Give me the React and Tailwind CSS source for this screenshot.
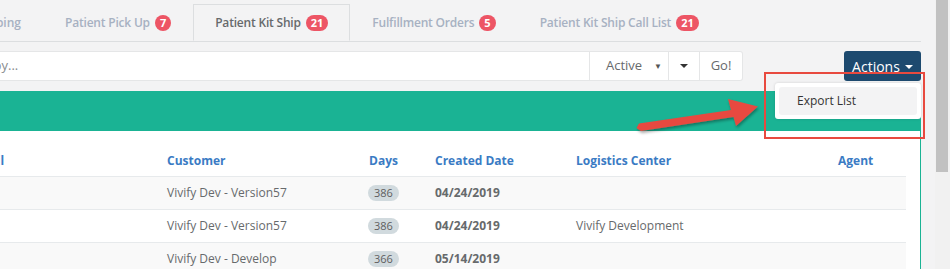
import React from 'react';

const TABS = [
  { label: 'Patient Pick Up', count: 7 },
  { label: 'Patient Kit Ship', count: 21, active: true },
  { label: 'Fulfillment Orders', count: 5 },
  { label: 'Patient Kit Ship Call List', count: 21 },
];

const ROWS = [
  { customer: 'Vivify Dev - Version57', days: 386, created: '04/24/2019', center: '' },
  { customer: 'Vivify Dev - Version57', days: 386, created: '04/24/2019', center: 'Vivify Development' },
  { customer: 'Vivify Dev - Develop', days: 366, created: '05/14/2019', center: '' },
];

const COLS = 'grid grid-cols-[159px_202px_66px_141px_262px_76px]';

function Badge({ n }) {
  return (
    <span className="ml-[5px] inline-flex h-[16px] min-w-[16px] items-center justify-center rounded-full bg-[#ed5565] px-[5px] text-[11px] font-bold leading-none tracking-normal text-white">
      {n}
    </span>
  );
}

function Tab({ label, count, active }) {
  return (
    <div
      className={`flex h-[37px] shrink-0 items-center whitespace-nowrap border px-[21px] text-[12px] font-semibold tracking-[-0.2px] ${
        active
          ? '-mb-px border-[#dcdee0] border-b-[#f3f3f4] bg-[#f3f3f4] text-[#676a6c]'
          : 'border-transparent text-[#a7b1c2]'
      }`}
    >
      {label}
      <Badge n={count} />
    </div>
  );
}

export default function App() {
  return (
    <div
      className="relative flex h-[269px] w-[950px] overflow-hidden bg-[#f3f3f4] text-[#676a6c]"
      style={{ fontFamily: '"Open Sans", "Noto Sans", sans-serif' }}
    >
      {/* main column */}
      <div className="flex w-[935px] shrink-0 flex-col pr-[14px]">
        {/* tabs */}
        <div className="flex shrink-0 border-b border-[#dcdee0] pt-[4px]">
          <div className="flex h-[37px] w-[43px] shrink-0 items-center justify-end overflow-hidden pr-[22px] text-[12px] font-semibold whitespace-nowrap text-[#a7b1c2]">
            Shipping
          </div>
          {TABS.map((t) => (
            <Tab key={t.label} {...t} />
          ))}
        </div>

        {/* toolbar */}
        <div className="mt-[9px] flex h-[30px] shrink-0 items-stretch">
          <div className="flex w-[590px] items-center overflow-hidden border border-l-0 border-[#e5e6e7] bg-white text-[13px] whitespace-nowrap text-[#8a8d90]">
            <span className="-ml-[51px]">Search by...</span>
          </div>
          <div className="flex w-[79px] items-center justify-between border border-l-0 border-[#e5e6e7] bg-white pl-[16px] pr-[6px] text-[13px] text-[#676a6c]">
            <span>Active</span>
            <span className="text-[8px] text-[#555]">▼</span>
          </div>
          <div className="flex w-[31px] items-center justify-center border border-l-0 border-[#e5e6e7] bg-white">
            <span className="h-0 w-0 border-x-[4px] border-t-[4px] border-x-transparent border-t-[#333]" />
          </div>
          <div className="flex w-[43px] items-center justify-center rounded-r-[3px] border border-l-0 border-[#e5e6e7] bg-white text-[13px] text-[#676a6c]">
            Go!
          </div>
          <div className="flex-1" />
          <div className="flex w-[77px] items-center justify-center gap-[5px] rounded-[3px] bg-[#1d4a6f] text-[14px] text-white">
            Actions
            <span className="mt-[2px] h-0 w-0 border-x-[4px] border-t-[4px] border-x-transparent border-t-white" />
          </div>
        </div>

        {/* panel */}
        <div className="mt-[10px] flex min-h-0 flex-1 flex-col overflow-hidden border-r border-[#1ab394] bg-white">
          <div className="h-[40px] shrink-0 bg-[#1ab394]" />
          <div className="shrink-0 pr-[14px] pt-[15px]">
            <div className={`${COLS} h-[30px] items-center text-[12px] font-bold text-[#3a7bc4]`}>
              <div className="overflow-hidden whitespace-nowrap">
                <span className="-ml-[29px]">Email</span>
              </div>
              <div className="pl-[8px]">Customer</div>
              <div className="pl-[8px]">Days</div>
              <div className="pl-[8px]">Created Date</div>
              <div className="pl-[8px]">Logistics Center</div>
              <div className="pl-[8px]">Agent</div>
            </div>
            {ROWS.map((r, i) => (
              <div
                key={i}
                className={`${COLS} h-[33px] items-center border-t border-[#e7eaec] text-[12px] ${
                  i % 2 === 0 ? 'bg-[#f9f9f9]' : 'bg-white'
                }`}
              >
                <div />
                <div className="pl-[8px]">{r.customer}</div>
                <div className="pl-[7px]">
                  <span className="inline-flex h-[16px] items-center rounded-full bg-[#d1dade] px-[6px] text-[11px] text-[#5e5e5e]">
                    {r.days}
                  </span>
                </div>
                <div className="pl-[8px] font-bold">{r.created}</div>
                <div className="pl-[8px]">{r.center}</div>
                <div />
              </div>
            ))}
          </div>
        </div>
      </div>

      {/* scrollbar */}
      <div className="w-[15px] shrink-0 bg-[#f1f1f1] pl-[1px] pr-[2px]">
        <div className="h-[172px] bg-[#c1c1c1]" />
      </div>

      {/* actions dropdown */}
      <div className="absolute left-[775px] top-[83px] w-[146px] rounded-[3px] bg-white p-[4px] shadow-[0_0_3px_rgba(0,0,0,0.15)]">
        <div className="flex h-[28px] items-center rounded-[3px] bg-[#f3f3f4] pl-[18px] text-[12px] text-[#333]">
          Export List
        </div>
      </div>

      {/* annotation: red frame */}
      <div className="pointer-events-none absolute left-[764px] top-[72px] h-[67px] w-[161px] border-[2.5px] border-[#e84a3f]" />

      {/* annotation: arrow */}
      <svg className="pointer-events-none absolute left-0 top-0" width="950" height="269" viewBox="0 0 950 269">
        <defs>
          <filter id="sh" x="-20%" y="-50%" width="140%" height="200%">
            <feDropShadow dx="1" dy="2" stdDeviation="1.5" floodColor="#000" floodOpacity="0.35" />
          </filter>
        </defs>
        <polygon
          points="639,123.5 731,110 728,99 758,106.5 736,126 733.5,117 641,131 636.5,128"
          fill="#e84a3f"
          filter="url(#sh)"
        />
      </svg>
    </div>
  );
}
